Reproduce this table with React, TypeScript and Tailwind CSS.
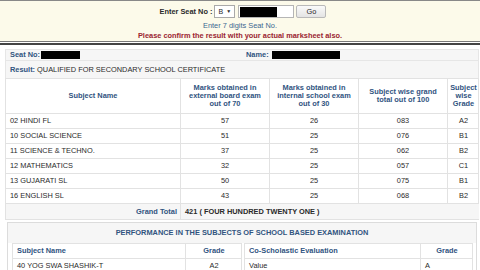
import React from "react";

const subjects = [
  { name: "02 HINDI FL", ext: "57", int: "26", total: "083", grade: "A2" },
  { name: "10 SOCIAL SCIENCE", ext: "51", int: "25", total: "076", grade: "B1" },
  { name: "11 SCIENCE & TECHNO.", ext: "37", int: "25", total: "062", grade: "B2" },
  { name: "12 MATHEMATICS", ext: "32", int: "25", total: "057", grade: "C1" },
  { name: "13 GUJARATI SL", ext: "50", int: "25", total: "075", grade: "B1" },
  { name: "16 ENGLISH SL", ext: "43", int: "25", total: "068", grade: "B2" },
];

const cell = "border-l border-t border-[#e2e2e2] flex items-center";

export default function App() {
  return (
    <div className="w-[480px] h-[270px] overflow-hidden bg-white font-['Liberation_Sans',Arial,sans-serif] text-[7.4px] leading-none text-[#2a2a2a]">
      {/* seat number search */}
      <div className="h-[41px] border-t border-[#888] bg-[#fcfaea] flex flex-col items-center pt-[4px]">
        <div className="flex items-center h-[13px] ml-[6px]">
          <span className="font-bold mr-[2px]">Enter Seat No :</span>
          <div className="w-[21px] h-[13px] border border-[#a9a9a9] bg-white flex items-center px-[3px] gap-[3px] text-[7px]">
            <span>B</span>
            <span className="text-[5px]">▼</span>
          </div>
          <div className="ml-[3px] w-[56px] h-[13px] border border-[#b5b5b5] bg-white flex items-center px-px">
            <div className="w-[37px] h-[10px] bg-black" />
          </div>
          <button className="ml-[2px] w-[30px] h-[13px] border border-[#b9b9b9] rounded-[2px] bg-gradient-to-b from-[#fafafa] to-[#e4e4e4] text-[7.4px]">
            Go
          </button>
        </div>
        <div className="mt-[4px] text-[#3b6790]">Enter 7 digits Seat No.</div>
        <div className="mt-[3px] font-bold text-[#9a2431]">Please confirm the result with your actual marksheet also.</div>
      </div>
      <div className="h-px bg-[#777]" />
      <div className="h-px" />
      <div className="h-[2px] bg-[#444]" />

      <div className="ml-[5px] w-[474px] mt-[4px]">
        {/* student info */}
        <div className="h-[12px] bg-[#f6f6f6] border border-[#e6e6e6] flex items-center">
          <div className="w-[235px] flex items-center pl-[4px]">
            <span className="font-bold text-[#31547f] mr-[1px]">Seat No:</span>
            <div className="w-[39px] h-[8px] bg-black" />
          </div>
          <div className="flex items-center pl-[5px]">
            <span className="font-bold text-[#31547f] mr-[3px]">Name:</span>
            <div className="w-[68px] h-[8px] bg-black" />
          </div>
        </div>
        <div className="h-[17px] bg-[#f6f6f6] border-x border-[#e6e6e6] flex items-center pl-[4px]">
          <span className="font-bold text-[#31547f] mr-[2px]">Result:</span>
          <span>QUALIFIED FOR SECONDARY SCHOOL CERTIFICATE</span>
        </div>

        {/* marks */}
        <div className="grid grid-cols-[175px_89px_89px_89px_32px] border-r border-b border-[#e2e2e2]">
          <div className={`${cell} h-[35px] justify-center font-bold text-[#31547f]`}>Subject Name</div>
          <div className={`${cell} justify-center text-center font-bold text-[#31547f] leading-[8px]`}>
            Marks obtained in<br />external board exam<br />out of 70
          </div>
          <div className={`${cell} justify-center text-center font-bold text-[#31547f] leading-[8px]`}>
            Marks obtained in<br />internal school exam<br />out of 30
          </div>
          <div className={`${cell} justify-center text-center font-bold text-[#31547f] leading-[8px]`}>
            Subject wise grand<br />total out of 100
          </div>
          <div className={`${cell} justify-center text-center font-bold text-[#31547f] leading-[8px]`}>
            Subject<br />wise<br />Grade
          </div>
          {subjects.map((s) => (
            <React.Fragment key={s.name}>
              <div className={`${cell} h-[15px] pl-[4px]`}>{s.name}</div>
              <div className={`${cell} justify-center`}>{s.ext}</div>
              <div className={`${cell} justify-center`}>{s.int}</div>
              <div className={`${cell} justify-center`}>{s.total}</div>
              <div className={`${cell} justify-center`}>{s.grade}</div>
            </React.Fragment>
          ))}
          <div className={`${cell} h-[16px] bg-[#f6f6f6] justify-end pr-[3px] font-bold text-[#31547f]`}>Grand Total</div>
          <div className={`${cell} col-span-4 bg-[#f6f6f6] pl-[4px] font-bold`}>421 ( FOUR HUNDRED TWENTY ONE )</div>
        </div>

        {/* school based examination */}
        <div className="mt-[2px] ml-[2px] w-[470px] border border-[#dcdcdc]">
          <div className="h-[20px] bg-[#f6f6f6] flex items-center justify-center font-bold text-[#31547f]">
            PERFORMANCE IN THE SUBJECTS OF SCHOOL BASED EXAMINATION
          </div>
          <div className="flex gap-[2px] px-[4px]">
            <div className="w-[230px] grid grid-cols-[173px_57px] border-r border-b border-[#e2e2e2]">
              <div className={`${cell} h-[15px] pl-[4px] font-bold text-[#31547f]`}>Subject Name</div>
              <div className={`${cell} justify-center font-bold text-[#31547f]`}>Grade</div>
              <div className={`${cell} h-[15px] pl-[4px]`}>40 YOG SWA SHASHIK-T</div>
              <div className={`${cell} justify-center`}>A2</div>
            </div>
            <div className="w-[229px] grid grid-cols-[176px_53px] border-r border-b border-[#e2e2e2]">
              <div className={`${cell} h-[15px] pl-[4px] font-bold text-[#31547f]`}>Co-Scholastic Evaluation</div>
              <div className={`${cell} justify-center font-bold text-[#31547f]`}>Grade</div>
              <div className={`${cell} h-[15px] pl-[4px]`}>Value</div>
              <div className={`${cell} pl-[4px]`}>A</div>
            </div>
          </div>
        </div>
      </div>
    </div>
  );
}
